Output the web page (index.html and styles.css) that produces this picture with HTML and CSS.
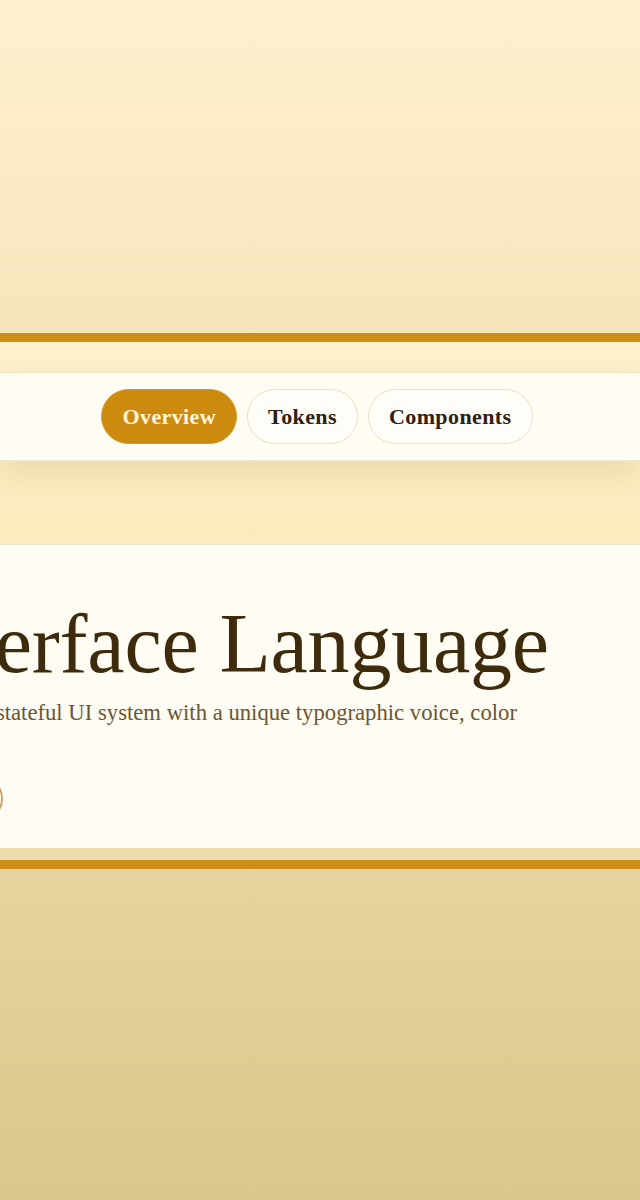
FILE: index.html
```html
<!DOCTYPE html>
<html lang="en">
<head>
<meta charset="utf-8">
<title>Interface Language</title>
<link rel="stylesheet" href="styles.css">
</head>
<body>
<div class="page">
  <section class="frame">
    <nav class="nav">
      <a class="tab tab-active" href="#">Overview</a>
      <a class="tab" href="#">Tokens</a>
      <a class="tab" href="#">Components</a>
    </nav>
    <header class="hero">
      <div class="hero-inner">
        <h1 class="title">Interface Language</h1>
        <p class="lead">A golden, stateful UI system with a unique typographic voice, color &amp; motion.</p>
        <div class="actions">
          <a class="btn-outline" href="#">Explore</a>
        </div>
      </div>
    </header>
  </section>
</div>
</body>
</html>
```
FILE: styles.css
```css
html, body {
  margin: 0;
  padding: 0;
}
body {
  min-height: 1200px;
  background: linear-gradient(180deg, #fff1cf 0%, #f6e4bb 28%, #e7d39e 72%, #dbc68c 100%);
  font-family: "Liberation Serif", "DejaVu Serif", serif;
  color: #3d2b0c;
  overflow-x: hidden;
}
.page {
  padding-top: 333px;
}
.frame {
  border-top: 9px solid #cd8d18;
  border-bottom: 9px solid #cd8d18;
  background: linear-gradient(180deg, #fdf0cb 0%, #fbebbf 35%, #f3e3b5 75%, #ecdcae 100%);
  padding: 30px 0 12px;
}
.nav {
  display: flex;
  justify-content: center;
  gap: 10px;
  padding: 16px 0;
  padding-right: 6px;
  background: #fffcf3;
  border-top: 1px solid #f1e5c5;
  border-bottom: 1px solid #f3e8ca;
  box-shadow: 0 14px 26px rgba(170, 130, 40, 0.16);
  margin-bottom: 83px;
  position: relative;
}
.tab {
  display: block;
  font-size: 22px;
  font-weight: 700;
  line-height: 25px;
  letter-spacing: 0.4px;
  padding: 14px 20px;
  border-radius: 999px;
  border: 1px solid #ebdfc0;
  background: #fffdf7;
  color: #2e2111;
  text-decoration: none;
}
.tab-active {
  background: #cc8b0f;
  border-color: #d99a22;
  color: #fff6de;
}
.hero {
  display: flex;
  justify-content: center;
  overflow: hidden;
  background: #fffcf3;
  border-top: 1px solid #f2e6c6;
  padding: 57px 0 26px;
}
.hero-inner {
  flex: none;
  width: 836px;
}
.title {
  margin: 0;
  font-size: 84px;
  line-height: 84px;
  font-weight: 400;
  letter-spacing: -0.2px;
  color: #3d2b0c;
  white-space: nowrap;
}
.lead {
  margin: 10px 0 0;
  max-width: 634px;
  font-size: 22.7px;
  line-height: 33px;
  color: #6b5630;
}
.actions {
  display: flex;
  margin-top: 13px;
}
.btn-outline {
  display: block;
  font-size: 18px;
  font-weight: 700;
  line-height: 22px;
  padding: 10.5px 18px;
  border: 2px solid #c9a463;
  border-radius: 999px;
  color: #3d2b0c;
  text-decoration: none;
}
```
